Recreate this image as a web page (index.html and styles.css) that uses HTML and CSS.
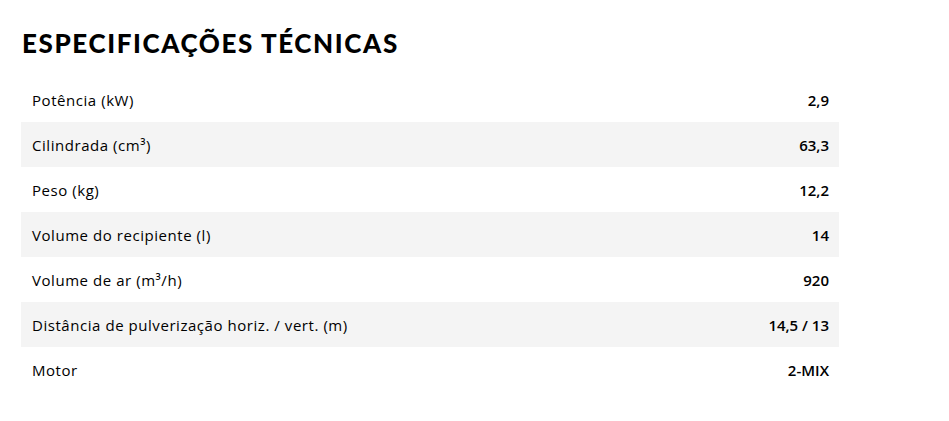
FILE: index.html
```html
<!DOCTYPE html>
<html lang="pt">
<head>
<meta charset="utf-8">
<link rel="stylesheet" href="styles.css">
</head>
<body>
<section class="specs">
  <h2 class="specs-title">Especificações técnicas</h2>
  <div class="specs-table">
    <div class="row"><span class="label">Potência (kW)</span><span class="value">2,9</span></div>
    <div class="row alt"><span class="label">Cilindrada (cm³)</span><span class="value">63,3</span></div>
    <div class="row"><span class="label">Peso (kg)</span><span class="value">12,2</span></div>
    <div class="row alt"><span class="label">Volume do recipiente (l)</span><span class="value">14</span></div>
    <div class="row"><span class="label">Volume de ar (m³/h)</span><span class="value">920</span></div>
    <div class="row alt"><span class="label">Distância de pulverização horiz. / vert. (m)</span><span class="value">14,5 / 13</span></div>
    <div class="row"><span class="label">Motor</span><span class="value">2-MIX</span></div>
  </div>
</section>
</body>
</html>
```

FILE: styles.css
```css
html, body {
  margin: 0;
  padding: 0;
  background: #fff;
}
body {
  font-family: "Open Sans", "Noto Sans", sans-serif;
  color: #000;
}
.specs {
  width: 818px;
  padding: 26px 0 0 21px;
}
.specs-title {
  margin: 0 0 17px 1px;
  font-family: "Lato", sans-serif;
  font-weight: 900;
  font-size: 26px;
  line-height: 34px;
  letter-spacing: 1.6px;
  text-transform: uppercase;
}
.specs-table {
  display: flex;
  flex-direction: column;
}
.row {
  display: flex;
  justify-content: space-between;
  align-items: center;
  height: 45px;
  padding: 0 10px 0 11px;
  font-size: 15px;
}
.row.alt {
  background: #f4f4f4;
}
.label {
  font-weight: 400;
  letter-spacing: 0.55px;
}
.value {
  font-weight: 600;
}
```
